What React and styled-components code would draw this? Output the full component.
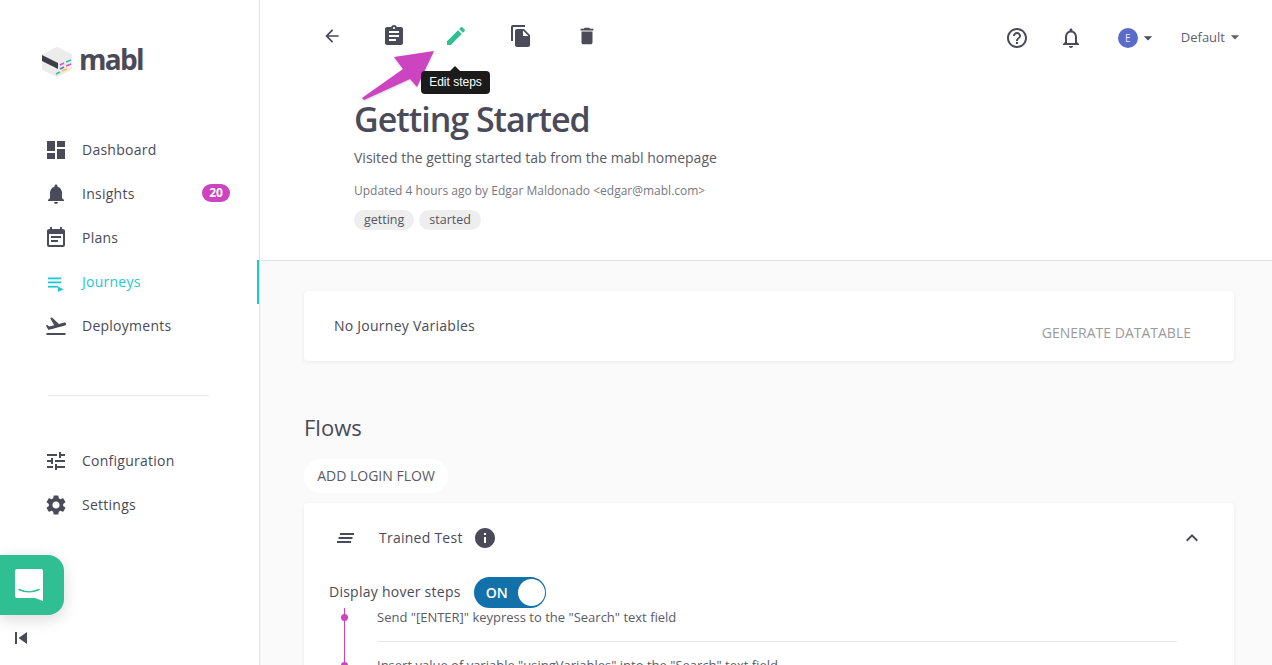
import styled, { createGlobalStyle } from 'styled-components'
import {
  MdDashboard,
  MdNotifications,
  MdNotificationsNone,
  MdEventNote,
  MdFlightTakeoff,
  MdTune,
  MdSettings,
  MdArrowBack,
  MdAssignment,
  MdEdit,
  MdFileCopy,
  MdDelete,
  MdHelpOutline,
  MdArrowDropDown,
  MdSkipPrevious,
  MdInfo,
  MdExpandLess,
} from 'react-icons/md'

const GlobalStyle = createGlobalStyle`
  html, body {
    margin: 0;
    padding: 0;
    height: 100%;
    overflow: hidden;
    background: #fff;
    font-family: "Open Sans", "Liberation Sans", sans-serif;
    color: #4a4a58;
  }
  * { box-sizing: border-box; }
`

const JourneysIcon = ({ size }) => (
  <svg width={size} height={size} viewBox="0 0 24 24" fill="currentColor">
    <rect x="4" y="7.500" width="13" height="1.800" />
    <rect x="4" y="11.500" width="13" height="1.800" />
    <rect x="4" y="15.800" width="10" height="1.800" />
    <polygon points="14,16.500 19.500,19.300 14,22" />
  </svg>
)

const primaryNav = [
  { label: 'Dashboard', icon: MdDashboard },
  { label: 'Insights', icon: MdNotifications, badge: 20 },
  { label: 'Plans', icon: MdEventNote },
  { label: 'Journeys', icon: JourneysIcon, active: true },
  { label: 'Deployments', icon: MdFlightTakeoff },
]

const secondaryNav = [
  { label: 'Configuration', icon: MdTune },
  { label: 'Settings', icon: MdSettings },
]

const Logo = () => (
  <LogoRow>
    <svg width="32" height="32" viewBox="0 0 32 32">
      <polygon
        points="16,2 30,9 30,23 16,30 2,23 2,9"
        fill="#ececec"
        stroke="#ececec"
        strokeWidth="2"
        strokeLinejoin="round"
      />
      <polygon points="1,9 17,17 17,23 1,15" fill="#3d3d48" />
      <g strokeWidth="1.600">
        <path d="M19 19l4-2" stroke="#e84fc0" />
        <path d="M25 16l5-2" stroke="#35c0a0" />
        <path d="M19 23l4-2" stroke="#4a78e0" />
        <path d="M25 20l5-2" stroke="#e84fc0" />
        <path d="M15 28l4-2" stroke="#35c0a0" />
        <path d="M21 25l5-2" stroke="#f3c340" />
      </g>
    </svg>
    <LogoText>mabl</LogoText>
  </LogoRow>
)

const NavList = ({ items }) => (
  <div>
    {items.map(({ label, icon: Icon, badge, active }) => (
      <NavItem key={label} $active={active}>
        <Icon size={24} />
        <NavLabel>{label}</NavLabel>
        {badge && <Badge>{badge}</Badge>}
      </NavItem>
    ))}
  </div>
)

const ActionArrow = () => (
  <ArrowMark width="90" height="60" viewBox="0 0 90 60">
    <polygon
      points="73,1 56,37 49,29 3,50 1,48 42,19 33,7"
      fill="#cc44bf"
    />
  </ArrowMark>
)

const App = () => {
  return (
    <Page>
      <GlobalStyle />
      <Sidebar>
        <Logo />
        <NavList items={primaryNav} />
        <NavDivider />
        <NavList items={secondaryNav} />
        <Collapse>
          <MdSkipPrevious size={24} />
        </Collapse>
      </Sidebar>
      <ChatButton>
        <svg width="28" height="32" viewBox="0 0 28 32">
          <path
            d="M2 0h24a2 2 0 0 1 2 2v30l-8-3H2a2 2 0 0 1-2-2V2a2 2 0 0 1 2-2z"
            fill="#fff"
          />
          <path
            d="M4 20.500c6 3 14 3 20 0"
            fill="none"
            stroke="#30bf92"
            strokeWidth="1.600"
            strokeLinecap="round"
          />
        </svg>
      </ChatButton>

      <Main>
        <Header>
          <Toolbar>
            <ActionIcons>
              <ActionButton><MdArrowBack size={20} /></ActionButton>
              <ActionButton><MdAssignment size={24} /></ActionButton>
              <ActionButton $color="#30bf92">
                <MdEdit size={24} />
                <ActionArrow />
                <Tooltip>Edit steps</Tooltip>
              </ActionButton>
              <ActionButton $shift={3}><MdFileCopy size={24} /></ActionButton>
              <ActionButton $shift={4}><MdDelete size={22} /></ActionButton>
            </ActionIcons>
            <UserTools>
              <MdHelpOutline size={24} />
              <MdNotificationsNone size={24} />
              <UserMenu>
                <Avatar>E</Avatar>
                <MdArrowDropDown size={20} />
              </UserMenu>
              <WorkspaceMenu>
                Default
                <MdArrowDropDown size={20} />
              </WorkspaceMenu>
            </UserTools>
          </Toolbar>
          <Summary>
            <Title>Getting Started</Title>
            <Description>Visited the getting started tab from the mabl homepage</Description>
            <Updated>Updated 4 hours ago by Edgar Maldonado &lt;edgar@mabl.com&gt;</Updated>
            <Tags>
              <Tag>getting</Tag>
              <Tag>started</Tag>
            </Tags>
          </Summary>
        </Header>

        <Content>
          <VariablesCard>
            <CardTitle>No Journey Variables</CardTitle>
            <TextAction>GENERATE DATATABLE</TextAction>
          </VariablesCard>

          <SectionTitle>Flows</SectionTitle>
          <PillButton>ADD LOGIN FLOW</PillButton>

          <FlowCard>
            <FlowHeader>
              <svg width="17" height="10" viewBox="0 0 17 10">
                <path
                  d="M3 1h14M1.500 5h14M0 9h14"
                  stroke="#4a4a58"
                  strokeWidth="2"
                  fill="none"
                />
              </svg>
              <FlowName>Trained Test</FlowName>
              <MdInfo size={24} />
              <Chevron><MdExpandLess size={24} /></Chevron>
            </FlowHeader>
            <HoverRow>
              <HoverLabel>Display hover steps</HoverLabel>
              <Toggle>
                ON
                <Knob />
              </Toggle>
            </HoverRow>
            <Steps>
              <Step><StepText>Send "[ENTER]" keypress to the "Search" text field</StepText></Step>
              <Step><StepText>Insert value of variable "usingVariables" into the "Search" text field</StepText></Step>
            </Steps>
          </FlowCard>
        </Content>
      </Main>
    </Page>
  )
}

const Page = styled.div`
  display: flex;
  height: 665px;
  overflow: hidden;
  position: relative;
`
const Sidebar = styled.aside`
  flex: 0 0 260px;
  display: flex;
  flex-direction: column;
  border-right: 1px solid #e2e2e2;
  background: #fff;
`
const LogoRow = styled.div`
  display: flex;
  align-items: center;
  gap: 6px;
  height: 128px;
  padding: 0 0 4px 41px;
`
const LogoText = styled.span`
  font-size: 28px;
  font-weight: 700;
  letter-spacing: -1.700px;
  color: #4a4a58;
  line-height: 1;
  margin-top: -7px;
`
const NavItem = styled.div`
  position: relative;
  display: flex;
  align-items: center;
  height: 44px;
  padding: 0 29px 0 44px;
  color: ${(p) => (p.$active ? '#1ec8d2' : '#4a4a58')};
  ${(p) => p.$active && `border-right: 2px solid #1ec8d2;`}
`
const NavLabel = styled.span`
  margin: -2px 0 0 14px;
  font-size: 14px;
  font-weight: 500;
  letter-spacing: 0.250px;
`
const Badge = styled.span`
  margin-left: auto;
  margin-top: -2px;
  width: 28px;
  height: 18px;
  border-radius: 9px;
  background: #cc44bf;
  color: #fff;
  font-size: 12px;
  font-weight: 700;
  line-height: 18px;
  text-align: center;
`
const NavDivider = styled.div`
  width: 161px;
  height: 1px;
  margin: 47px 0 43px 48px;
  background: #e8e8e8;
`
const Collapse = styled.div`
  margin-top: auto;
  padding: 0 0 15px 9px;
  color: #4a4a58;
  display: flex;
`
const ChatButton = styled.div`
  position: absolute;
  left: 0;
  top: 555px;
  width: 64px;
  height: 60px;
  display: flex;
  align-items: center;
  justify-content: center;
  background: #30bf92;
  border-radius: 0 16px 16px 0;
  box-shadow: 0 4px 16px rgba(0, 0, 0, 0.15);
  svg { margin-right: 6px; }
`
const Main = styled.main`
  flex: 1;
  min-width: 0;
  display: flex;
  flex-direction: column;
`
const Header = styled.header`
  height: 261px;
  flex: none;
  background: #fff;
  border-bottom: 1px solid #e2e2e2;
`
const Toolbar = styled.div`
  display: flex;
  justify-content: space-between;
  align-items: flex-start;
  padding: 20px 27px 0 56px;
`
const ActionIcons = styled.div`
  display: flex;
  gap: 30px;
`
const ActionButton = styled.div`
  position: relative;
  width: 32px;
  height: 32px;
  margin-left: ${(p) => p.$shift || 0}px;
  display: flex;
  align-items: center;
  justify-content: center;
  color: ${(p) => p.$color || '#4a4a58'};
`
const ArrowMark = styled.svg`
  position: absolute;
  left: -79px;
  top: 30px;
  filter: drop-shadow(0 1px 1px rgba(0, 0, 0, 0.2));
`
const Tooltip = styled.div`
  position: absolute;
  left: -19px;
  top: 51px;
  width: 69px;
  height: 23px;
  border-radius: 4px;
  background: #1b1b1b;
  color: #fff;
  font-family: "Liberation Sans", sans-serif;
  font-size: 12px;
  line-height: 23px;
  text-align: center;
  white-space: nowrap;
  &::before {
    content: '';
    position: absolute;
    left: 29px;
    top: -5px;
    border: 5px solid transparent;
    border-top: 0;
    border-bottom-color: #1b1b1b;
  }
`
const UserTools = styled.div`
  display: flex;
  align-items: center;
  gap: 30px;
  height: 36px;
  color: #4a4a58;
`
const UserMenu = styled.div`
  display: flex;
  align-items: center;
  margin: 0 -7px 0 5px;
`
const Avatar = styled.div`
  width: 20px;
  height: 20px;
  border-radius: 50%;
  background: #5a6bc8;
  color: #e8e8f4;
  font-size: 10px;
  line-height: 20px;
  text-align: center;
`
const WorkspaceMenu = styled.div`
  display: flex;
  align-items: center;
  font-size: 13px;
  margin-top: -2px;
  color: #5e5e6a;
`
const Summary = styled.div`
  padding: 40px 0 0 94px;
`
const Title = styled.h1`
  margin: 0;
  font-size: 34px;
  line-height: 46px;
  font-weight: 600;
  letter-spacing: -1px;
  color: #4a4a58;
`
const Description = styled.p`
  margin: 6px 0 0;
  font-size: 14px;
  line-height: 20px;
  color: #5a5a66;
`
const Updated = styled.p`
  margin: 13px 0 0;
  font-size: 12px;
  line-height: 20px;
  color: #777782;
`
const Tags = styled.div`
  display: flex;
  gap: 5px;
  margin-top: 9px;
`
const Tag = styled.span`
  height: 20px;
  padding: 0 10px;
  border-radius: 10px;
  background: #eeeeee;
  font-size: 12.500px;
  line-height: 20px;
  color: #555560;
`
const Content = styled.div`
  flex: 1;
  min-height: 0;
  overflow: hidden;
  padding: 30px 38px 0 44px;
  background: #fafafa;
`
const VariablesCard = styled.section`
  display: flex;
  justify-content: space-between;
  height: 70px;
  padding: 25px 43px 0 30px;
  background: #fff;
  border-radius: 4px;
  box-shadow: 0 1px 4px rgba(0, 0, 0, 0.07);
`
const CardTitle = styled.span`
  font-size: 14px;
  font-weight: 500;
  letter-spacing: 0.250px;
  line-height: 20px;
  color: #4a4a58;
`
const TextAction = styled.span`
  font-size: 14px;
  line-height: 20px;
  margin-top: 7px;
  color: #9b9b9b;
`
const SectionTitle = styled.h2`
  margin: 48px 0 0;
  font-size: 22px;
  line-height: 36px;
  font-weight: 400;
  color: #4a4a58;
`
const PillButton = styled.div`
  width: 144px;
  height: 34px;
  margin-top: 14px;
  border-radius: 17px;
  background: #fff;
  font-size: 14px;
  line-height: 34px;
  text-align: center;
  color: #5a5a66;
`
const FlowCard = styled.section`
  margin-top: 10px;
  height: 300px;
  padding: 0 34px 0 25px;
  background: #fff;
  border-radius: 4px;
  box-shadow: 0 1px 4px rgba(0, 0, 0, 0.07);
`
const FlowHeader = styled.div`
  display: flex;
  align-items: center;
  height: 74px;
  padding: 0 0 4px 8px;
  color: #4a4a58;
`
const FlowName = styled.span`
  margin: -2px 10px 0 25px;
  font-size: 14px;
  font-weight: 500;
  letter-spacing: 0.250px;
`
const Chevron = styled.span`
  display: flex;
  margin-left: auto;
  margin-right: -4px;
`
const HoverRow = styled.div`
  display: flex;
  align-items: center;
  gap: 13px;
`
const HoverLabel = styled.span`
  margin-top: -3px;
  font-size: 14px;
  font-weight: 500;
  letter-spacing: 0.250px;
  color: #4a4a58;
`
const Toggle = styled.div`
  position: relative;
  width: 72px;
  height: 31px;
  padding-left: 12px;
  border-radius: 16px;
  background: #1270aa;
  color: #fff;
  font-size: 14px;
  font-weight: 600;
  line-height: 31px;
`
const Knob = styled.span`
  position: absolute;
  right: 1px;
  top: 2px;
  width: 27px;
  height: 27px;
  border-radius: 50%;
  background: #fff;
`
const Steps = styled.ol`
  list-style: none;
  margin: 0;
  padding: 0 23px 0 48px;
`
const Step = styled.li`
  position: relative;
  height: 48px;
  &::before {
    content: '';
    position: absolute;
    left: -33px;
    top: 0;
    bottom: 0;
    width: 1px;
    background: #cc44bf;
  }
  &::after {
    content: '';
    position: absolute;
    left: -36px;
    top: 6px;
    width: 7px;
    height: 7px;
    border-radius: 50%;
    background: #cc44bf;
  }
`
const StepText = styled.div`
  height: 34px;
  border-bottom: 1px solid #e8e8e8;
  font-size: 13px;
  line-height: 18px;
  color: #5a5a66;
`

export default App
